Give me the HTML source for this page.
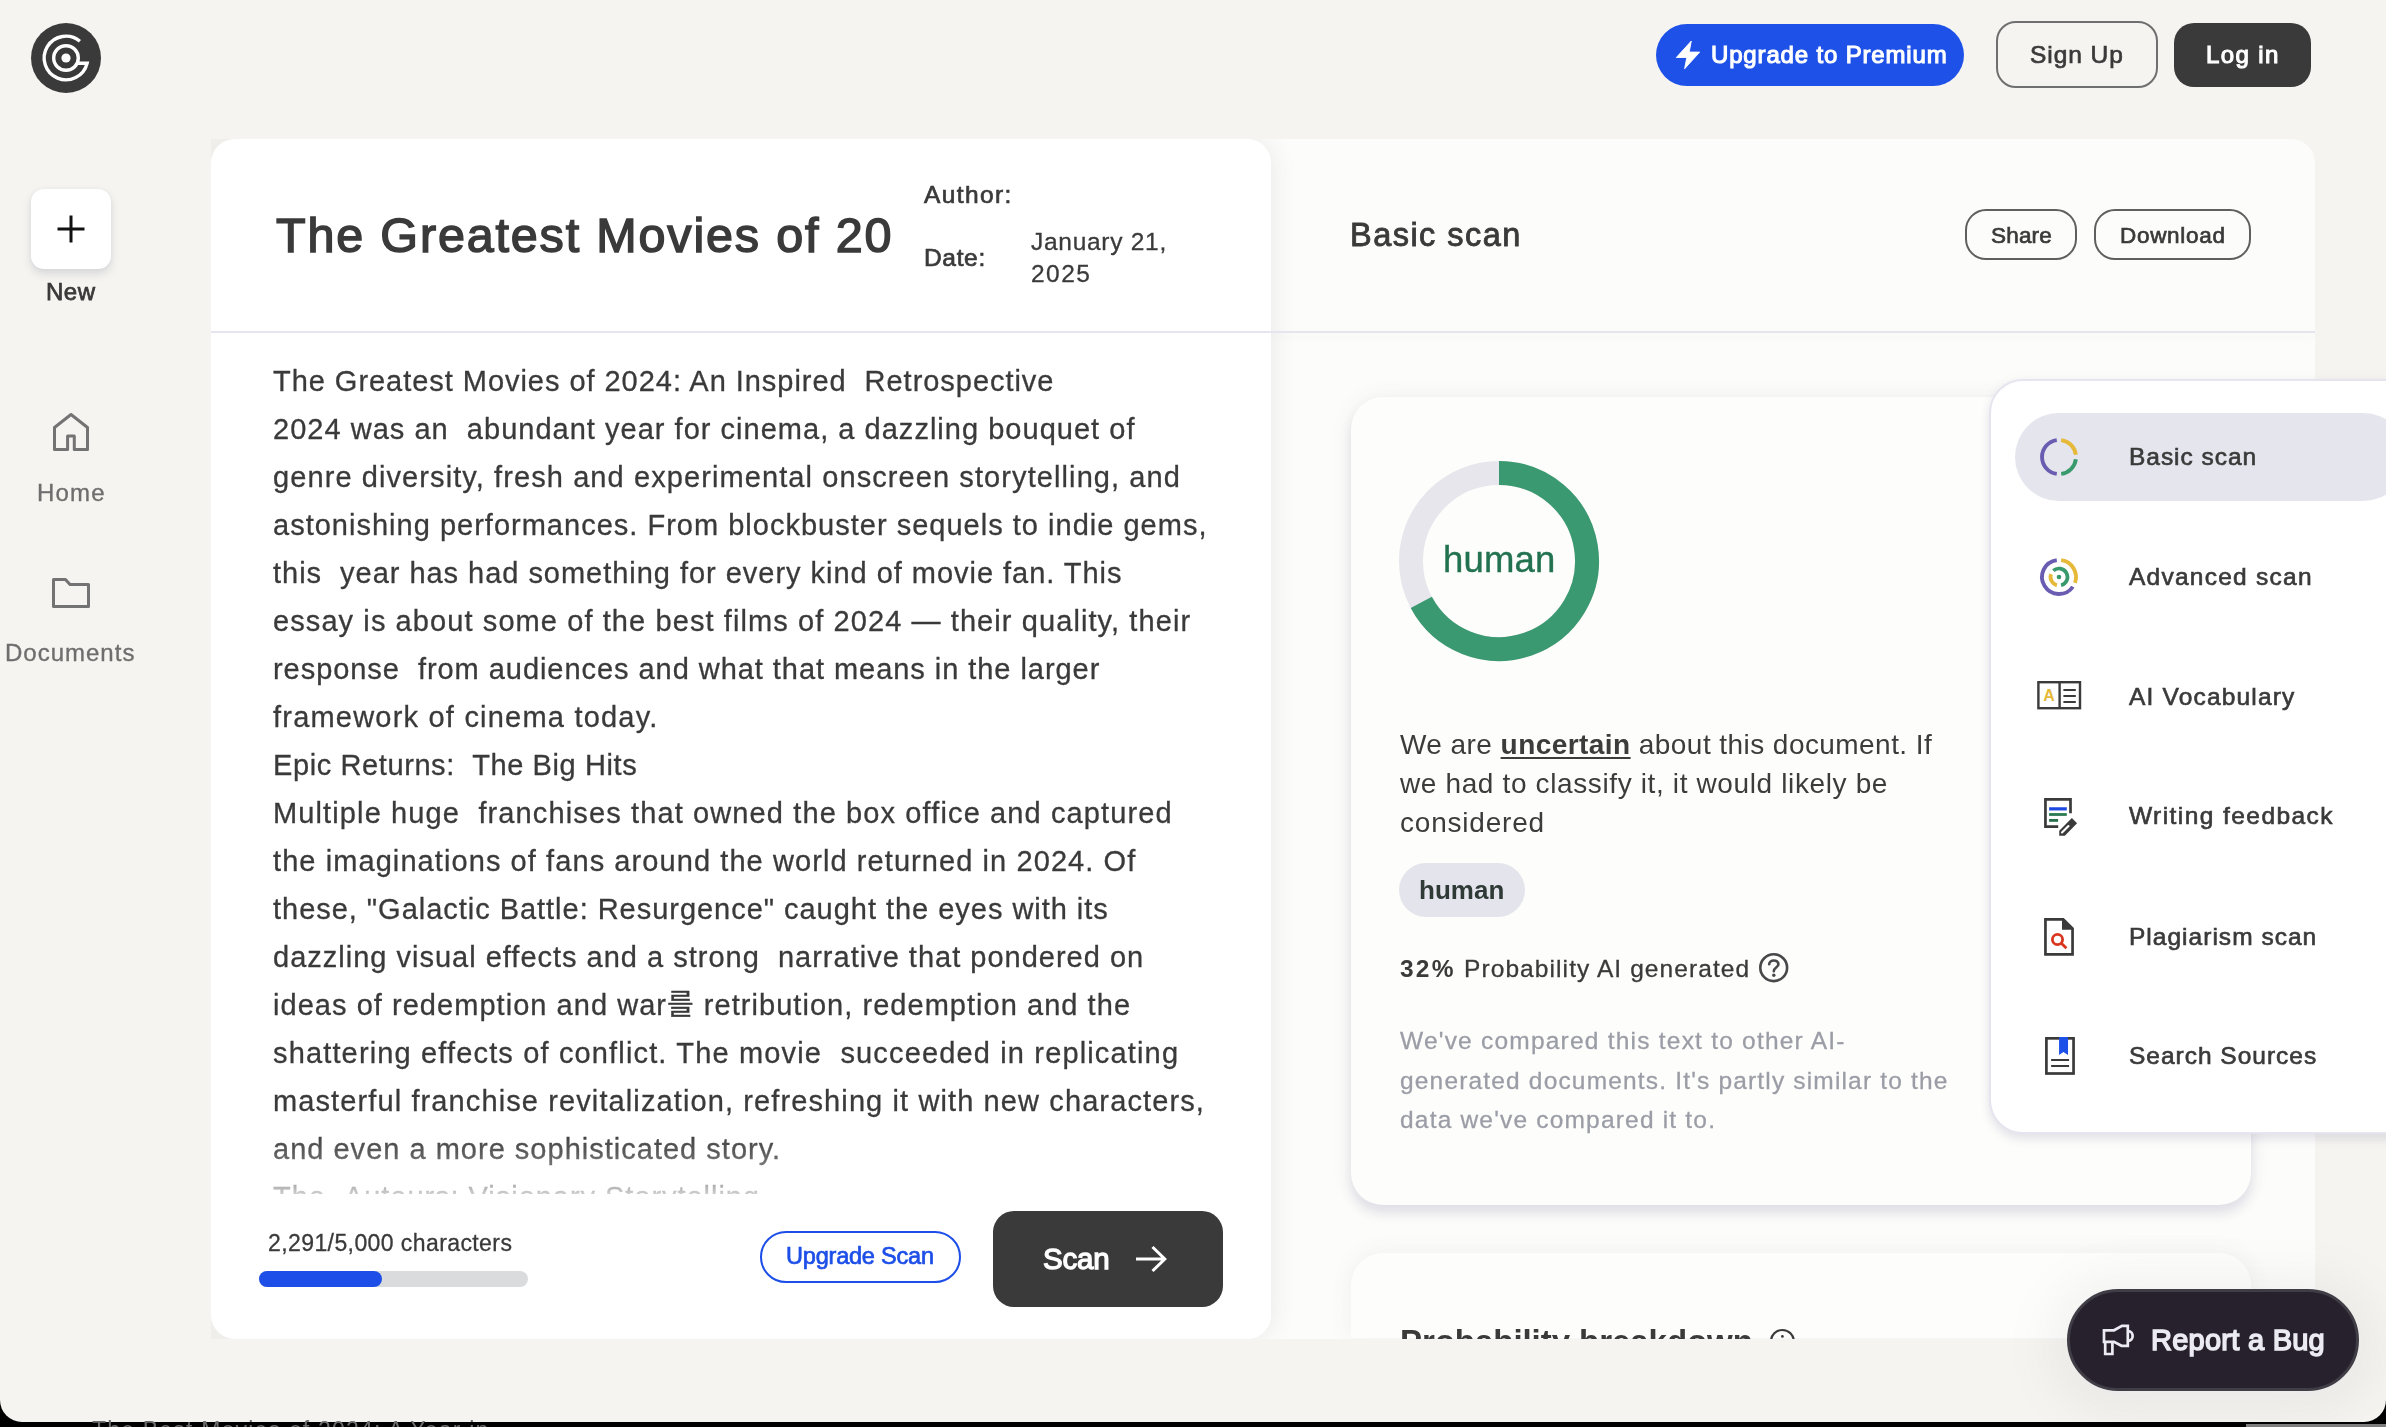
<!DOCTYPE html>
<html lang="en">
<head>
<meta charset="utf-8">
<title>GPTZero</title>
<style>
*{box-sizing:border-box;margin:0;padding:0}
html,body{width:2386px;height:1427px;overflow:hidden;background:#000}
body{font-family:"Liberation Sans","Noto Sans CJK KR",sans-serif;color:#3a3a3a;position:relative}
.abs{position:absolute}
#win{position:absolute;left:0;top:0;width:2386px;height:1422px;background:#f5f4f0;border-radius:0 0 22px 22px;overflow:hidden}
.t{position:absolute;white-space:nowrap;line-height:1;will-change:transform}
/* sidebar */
#logo{left:31px;top:23px;width:70px;height:70px}
#newbtn{left:31px;top:189px;width:80px;height:80px;background:#fff;border-radius:13px;box-shadow:0 5px 8px rgba(120,125,150,.22),0 0 4px rgba(120,125,150,.08)}
/* main */
#cornerbg{left:211px;top:139px;width:40px;height:1199.5px;background:#efeeeb}
#right{left:1241px;top:139px;width:1074px;height:1199.5px;background:#fcfcfa;border-radius:0 24px 24px 0;overflow:hidden}
#right:before{content:'';position:absolute;left:-200px;top:0;width:230px;height:1199.5px;border-radius:24px;box-shadow:0 0 26px rgba(60,60,90,.11)}
#left{left:211px;top:139px;width:1060px;height:1199.5px;background:#fff;border-radius:24px}
.hr{height:2px;background:#e6e5ee}
/* body text */
#doc{left:273px;top:357px;width:980px;height:837px;overflow:hidden;will-change:transform}
#doc .l{display:block;height:48px;line-height:48px;white-space:nowrap;font-size:29px;color:#3a3a3a;-webkit-text-stroke:.3px #3a3a3a}
#fade{left:221px;top:1130px;width:1040px;height:80px;background:linear-gradient(rgba(255,255,255,0),rgba(255,255,255,.17) 28%,rgba(255,255,255,.45) 60%,rgba(255,255,255,.72) 78%,#fff 100%)}
.pill{position:absolute;border-radius:999px;display:flex;align-items:center;justify-content:center;white-space:nowrap}
</style>
</head>
<body>
<div id="win">
<nav>
<svg class="abs" id="logo" viewBox="0 0 70 70">
<circle cx="35" cy="35" r="35" fill="#3a3a3a"/>
<g fill="none" stroke="#fff" stroke-width="3.4">
<path d="M48.9 18.2 A21.8 21.8 0 1 0 56.1 40.3 H46.5" stroke-linejoin="miter"/>
<circle cx="35" cy="35" r="12.3"/>
</g>
<circle cx="35" cy="35" r="4.6" fill="#fff"/>
</svg>
<div class="abs" id="newbtn"></div>
<svg class="abs" style="left:55px;top:213px;width:32px;height:32px" viewBox="0 0 32 32"><path d="M16 2.5V29.5M2.5 16H29.5" stroke="#111" stroke-width="3" fill="none"/></svg>
<div class="t" style="left:45.5px;top:280.3px;font-size:24px;letter-spacing:0.54px;-webkit-text-stroke:0.75px currentColor;">New</div>
<svg class="abs" style="left:49px;top:410px;width:44px;height:44px" viewBox="0 0 44 44" fill="none" stroke="#737373" stroke-width="3" stroke-linejoin="round" stroke-linecap="round">
<path d="M5.5 17.5 L22 4.5 L38.5 17.5 V39.5 H25.3 V26 H18.6 V39.5 H5.5 Z"/></svg>
<div class="t" style="left:36.8px;top:480.5px;font-size:24px;color:#6e6e6e;letter-spacing:1.16px;-webkit-text-stroke:0.35px currentColor;">Home</div>
<svg class="abs" style="left:49px;top:572px;width:44px;height:44px" viewBox="0 0 44 44" fill="none" stroke="#737373" stroke-width="3" stroke-linejoin="round">
<path d="M4.5 7.5 H16.5 L21 12.5 H39.5 V34.5 H4.5 Z"/></svg>
<div class="t" style="left:5.2px;top:641.0px;font-size:24px;color:#6e6e6e;letter-spacing:1.00px;-webkit-text-stroke:0.35px currentColor;">Documents</div>
</nav>
<header>
<div class="pill" style="left:1656px;top:24px;width:308px;height:62px;background:#1d51e8"></div>
<svg class="abs" style="left:1674px;top:39px;width:28px;height:32px" viewBox="0 0 28 32"><path d="M17.3 2 L2.3 18.5 H12.8 L10.6 29.8 L25.7 13.1 H15.2 Z" fill="#fff" stroke="#fff" stroke-width="0.9" stroke-linejoin="round"/></svg>
<div class="t" style="left:1711.3px;top:42.8px;font-size:24px;color:#fff;letter-spacing:0.84px;-webkit-text-stroke:1.1px currentColor;">Upgrade to Premium</div>
<div class="abs" style="left:1996px;top:21px;width:162px;height:67px;border:2px solid #6f6f6f;border-radius:20px"></div>
<div class="t" style="left:2030.0px;top:42.5px;font-size:24.5px;letter-spacing:0.94px;-webkit-text-stroke:0.7px currentColor;">Sign Up</div>
<div class="abs" style="left:2174px;top:23px;width:137px;height:64px;background:#3a3a3a;border-radius:20px"></div>
<div class="t" style="left:2206.0px;top:42.8px;font-size:24px;color:#fff;letter-spacing:1.38px;-webkit-text-stroke:1.1px currentColor;">Log in</div>
</header>
<main>
<div class="abs" id="cornerbg"></div>
<div class="abs" id="right"></div>
<div class="abs hr" style="left:1271px;top:331px;width:1044px;box-shadow:0 3px 8px rgba(90,90,130,.08)"></div>
<div class="abs" id="left"></div>
<div class="abs hr" style="left:211px;top:331px;width:1060px"></div>
<div class="t" style="left:276.0px;top:210.9px;font-size:48.5px;letter-spacing:1.83px;-webkit-text-stroke:1.5px currentColor;">The Greatest Movies of 20</div>
<div class="t" style="left:924.3px;top:182.6px;font-size:24.5px;letter-spacing:1.37px;-webkit-text-stroke:0.7px currentColor;">Author:</div>
<div class="t" style="left:924.3px;top:246.1px;font-size:24.5px;letter-spacing:0.66px;-webkit-text-stroke:0.7px currentColor;">Date:</div>
<div class="t" style="left:1030.5px;top:230.2px;font-size:24.5px;letter-spacing:0.72px;-webkit-text-stroke:0.3px currentColor;">January 21,</div>
<div class="t" style="left:1030.5px;top:262.0px;font-size:24.5px;letter-spacing:1.46px;-webkit-text-stroke:0.3px currentColor;">2025</div>
<div class="abs" id="doc">
<span class="l" style="letter-spacing:0.96px">The Greatest Movies of 2024: An Inspired &nbsp;Retrospective</span>
<span class="l" style="letter-spacing:1.02px">2024 was an &nbsp;abundant year for cinema, a dazzling bouquet of</span>
<span class="l" style="letter-spacing:1.09px">genre diversity, fresh and experimental onscreen storytelling, and</span>
<span class="l" style="letter-spacing:1.01px">astonishing performances. From blockbuster sequels to indie gems,</span>
<span class="l" style="letter-spacing:0.97px">this &nbsp;year has had something for every kind of movie fan. This</span>
<span class="l" style="letter-spacing:1.09px">essay is about some of the best films of 2024 — their quality, their</span>
<span class="l" style="letter-spacing:0.95px">response &nbsp;from audiences and what that means in the larger</span>
<span class="l" style="letter-spacing:1.21px">framework of cinema today.</span>
<span class="l" style="letter-spacing:0.60px">Epic Returns: &nbsp;The Big Hits</span>
<span class="l" style="letter-spacing:1.12px">Multiple huge &nbsp;franchises that owned the box office and captured</span>
<span class="l" style="letter-spacing:1.08px">the imaginations of fans around the world returned in 2024. Of</span>
<span class="l" style="letter-spacing:0.97px">these, "Galactic Battle: Resurgence" caught the eyes with its</span>
<span class="l" style="letter-spacing:1.00px">dazzling visual effects and a strong &nbsp;narrative that pondered on</span>
<span class="l" style="letter-spacing:1.04px">ideas of redemption and war를 retribution, redemption and the</span>
<span class="l" style="letter-spacing:1.15px">shattering effects of conflict. The movie &nbsp;succeeded in replicating</span>
<span class="l" style="letter-spacing:1.11px">masterful franchise revitalization, refreshing it with new characters,</span>
<span class="l" style="letter-spacing:1.01px">and even a more sophisticated story.</span>
<span class="l" style="letter-spacing:0.96px">The &nbsp;Auteurs: Visionary Storytelling</span>
</div>
<div class="abs" id="fade"></div>
<div class="t" style="left:267.8px;top:1232.2px;font-size:23px;letter-spacing:0.41px;-webkit-text-stroke:0.3px currentColor;">2,291/5,000 characters</div>
<div class="abs" style="left:259px;top:1271px;width:269px;height:16px;border-radius:8px;background:#d9dbdc"></div>
<div class="abs" style="left:259px;top:1271px;width:123px;height:16px;border-radius:8px;background:#1d4fe8"></div>
<div class="pill" style="left:760px;top:1231px;width:201px;height:52px;border:2px solid #1d4fe8;background:#fff"></div>
<div class="t" style="left:786.4px;top:1245.1px;font-size:23.5px;color:#1d4fe8;letter-spacing:-0.20px;-webkit-text-stroke:0.7px currentColor;">Upgrade Scan</div>
<div class="abs" style="left:993px;top:1211px;width:230px;height:96px;border-radius:21px;background:#3a3a3a"></div>
<div class="t" style="left:1042.5px;top:1243.7px;font-size:29.5px;color:#fff;letter-spacing:-0.18px;-webkit-text-stroke:1.3px currentColor;">Scan</div>
<svg class="abs" style="left:1132px;top:1243px;width:38px;height:32px" viewBox="0 0 38 32"><path d="M4 16H33M20.5 4L32.8 16L20.5 28" stroke="#fff" stroke-width="3" fill="none"/></svg>
</main>
<section>
<div class="t" style="left:1350.3px;top:218.7px;font-size:32.5px;letter-spacing:1.47px;-webkit-text-stroke:0.85px currentColor;">Basic scan</div>
<div class="abs" style="left:1965px;top:209px;width:112px;height:51px;border:2px solid #5f5f5f;border-radius:21px"></div>
<div class="t" style="left:1991.4px;top:224.8px;font-size:22.5px;letter-spacing:0.19px;-webkit-text-stroke:0.7px currentColor;">Share</div>
<div class="abs" style="left:2094px;top:209px;width:157px;height:51px;border:2px solid #5f5f5f;border-radius:21px"></div>
<div class="t" style="left:2120.3px;top:224.8px;font-size:22.5px;letter-spacing:0.69px;-webkit-text-stroke:0.7px currentColor;">Download</div>
<div class="abs" style="left:1271px;top:333px;width:1044px;height:1005.5px;overflow:hidden;border-radius:0 0 24px 0"><div class="abs" style="left:-1271px;top:-333px;width:10px;height:10px">
<div class="abs" style="left:1351px;top:397px;width:900px;height:808px;border-radius:32px;background:#fdfdfb;box-shadow:0 8px 12px rgba(90,90,140,.15),0 0 22px rgba(90,90,130,.07)"></div>
<div class="abs" style="left:1351px;top:1253px;width:900px;height:85px;border-radius:32px 32px 0 0;background:#fdfdfb;box-shadow:0 0 22px rgba(90,90,130,.08)"></div>
</div></div>
<svg class="abs" style="left:1395px;top:457px;width:208px;height:208px" viewBox="1395 457 208 208" fill="none" stroke-width="24">
<circle cx="1499" cy="561" r="88" stroke="#e6e6ec"/>
<path d="M1499.00 473.00 A88 88 0 1 1 1421.30 602.31" stroke="#3a9970"/>
</svg>
<div class="t" style="left:1442.8px;top:541.9px;font-size:36.5px;color:#227250;letter-spacing:0.15px;-webkit-text-stroke:0.4px currentColor;">human</div>
<div class="t" style="left:1399.5px;top:731.0px;font-size:28px;color:#3c3c3c;letter-spacing:0.44px;">We are <b style="text-decoration:underline;text-decoration-thickness:2px;text-underline-offset:3px">uncertain</b> about this document. If</div>
<div class="t" style="left:1399.5px;top:770.0px;font-size:28px;color:#3c3c3c;letter-spacing:0.63px;">we had to classify it, it would likely be</div>
<div class="t" style="left:1399.5px;top:808.8px;font-size:28px;color:#3c3c3c;letter-spacing:0.80px;">considered</div>
<div class="pill" style="left:1399px;top:863px;width:126px;height:54px;background:#e4e4ec"></div>
<div class="t" style="left:1419.2px;top:876.6px;font-size:26px;font-weight:700;color:#2f3a37;letter-spacing:0.04px;">human</div>
<div class="t" style="left:1399.5px;top:956.6px;font-size:24.5px;font-weight:700;letter-spacing:2.23px;">32%</div>
<div class="t" style="left:1464.3px;top:956.6px;font-size:24.5px;letter-spacing:1.09px;-webkit-text-stroke:0.3px currentColor;">Probability AI generated</div>
<svg class="abs" style="left:1757px;top:951px;width:34px;height:34px" viewBox="0 0 34 34" fill="none" stroke="#48484b" stroke-width="2.6">
<circle cx="16.7" cy="16.7" r="13.4"/><path d="M12.2 13.3 C12.2 8.2 21.4 8.2 21.4 13.2 C21.4 16.6 16.8 16.4 16.8 20.2" stroke-linecap="round"/><circle cx="16.8" cy="24.3" r="1.7" fill="#48484b" stroke="none"/></svg>
<div class="t" style="left:1399.5px;top:1028.8px;font-size:24.5px;color:#9b9da6;letter-spacing:1.22px;-webkit-text-stroke:0.3px currentColor;">We've compared this text to other AI-</div>
<div class="t" style="left:1399.5px;top:1068.6px;font-size:24.5px;color:#9b9da6;letter-spacing:1.17px;-webkit-text-stroke:0.3px currentColor;">generated documents. It's partly similar to the</div>
<div class="t" style="left:1399.5px;top:1108.3px;font-size:24.5px;color:#9b9da6;letter-spacing:1.19px;-webkit-text-stroke:0.3px currentColor;">data we've compared it to.</div>
<div class="abs" style="left:1380px;top:1300px;width:460px;height:38.5px;overflow:hidden">
<div class="t" style="left:20.0px;top:25.1px;font-size:33px;font-weight:700;letter-spacing:-0.05px;">Probability breakdown</div>
<svg class="abs" style="left:388px;top:27px;width:30px;height:30px" viewBox="0 0 30 30" fill="none" stroke="#3a3a3a" stroke-width="2.2"><circle cx="14.4" cy="14.4" r="11.4"/><circle cx="14.4" cy="9.4" r="1.4" fill="#3a3a3a" stroke="none"/></svg>
</div>
</section>
<aside>
<div class="abs" style="left:1989px;top:379px;width:460px;height:755px;border-radius:34px;background:#fff;border:2px solid #e5e4ef;box-shadow:0 6px 10px rgba(90,90,140,.13),0 0 12px rgba(90,90,130,.05)"></div>
<div class="abs" style="left:2015px;top:413px;width:392px;height:88px;border-radius:44px;background:#e5e5ee"></div>
<svg class="abs" style="left:2035px;top:433px;width:48px;height:48px" viewBox="2035 433 48 48" fill="none" stroke-width="3.9">
<path d="M2056.78 473.85 A17 17 0 0 1 2056.78 440.15" stroke="#6a5cb0"/><path d="M2061.22 440.15 A17 17 0 0 1 2075.85 454.78" stroke="#e6b93a"/><path d="M2075.85 459.22 A17 17 0 0 1 2061.22 473.85" stroke="#389a6c"/></svg>
<div class="t" style="left:2128.5px;top:444.9px;font-size:24.5px;letter-spacing:0.96px;-webkit-text-stroke:0.65px currentColor;">Basic scan</div>
<svg class="abs" style="left:2035px;top:553px;width:48px;height:48px" viewBox="2035 553 48 48" fill="none" stroke-width="3.9">
<path d="M2072.93 586.75 A17 17 0 1 1 2056.78 560.15" stroke="#6a5cb0"/><path d="M2061.22 560.15 A17 17 0 0 1 2074.97 582.81" stroke="#e6b93a"/>
<path d="M2053.31 570.68 A8.5 8.5 0 1 1 2061.06 585.25" stroke="#389a6c" stroke-width="3.7"/><path d="M2056.94 585.25 A8.5 8.5 0 0 1 2051.01 574.09" stroke="#e6b93a" stroke-width="3.7"/>
<circle cx="2059" cy="577" r="2.3" fill="#389a6c"/></svg>
<div class="t" style="left:2128.5px;top:565.1px;font-size:24.5px;letter-spacing:1.25px;-webkit-text-stroke:0.65px currentColor;">Advanced scan</div>
<svg class="abs" style="left:2035px;top:678px;width:50px;height:34px" viewBox="2035 678 50 34" fill="none" stroke="#3a3a3a" stroke-width="2.4">
<rect x="2038.4" y="682.2" width="41.6" height="26"/><path d="M2059.6 682V708"/>
<path d="M2063.4 690H2075.8M2063.4 695.9H2075.8M2063.4 701.9H2075.8" stroke-width="2"/>
<text x="2049" y="701" font-family="Liberation Sans,sans-serif" font-weight="700" font-size="16" fill="#e6b93a" stroke="none" text-anchor="middle">A</text></svg>
<div class="t" style="left:2128.5px;top:684.8px;font-size:24.5px;letter-spacing:1.18px;-webkit-text-stroke:0.65px currentColor;">AI Vocabulary</div>
<svg class="abs" style="left:2040px;top:794px;width:42px;height:46px" viewBox="2040 794 42 46" fill="none">
<path d="M2070.5 813.2V799.4H2045.45V826.55H2058.2" stroke="#3a3a3a" stroke-width="2.7"/>
<path d="M2049.1 808.85H2066.8" stroke="#1c47e0" stroke-width="3.2"/><path d="M2049.1 814.5H2066.8" stroke="#2a7a52" stroke-width="2.8"/><path d="M2049.1 820.4H2058.1" stroke="#266f4b" stroke-width="2.8"/>
<path d="M2071.85 818.1L2077.06 823.16L2064.84 835.77H2059.24V830.73Z" fill="#3a3a3a"/><path d="M2062 832.5L2068.5 826" stroke="#fff" stroke-width="2.1" stroke-linecap="round"/></svg>
<div class="t" style="left:2128.5px;top:804.4px;font-size:24.5px;letter-spacing:1.43px;-webkit-text-stroke:0.65px currentColor;">Writing feedback</div>
<svg class="abs" style="left:2040px;top:914px;width:40px;height:46px" viewBox="2040 914 40 46" fill="none">
<path d="M2045.45 919.4H2063.2L2072.55 928.6V954.4H2045.45Z" stroke="#3a3a3a" stroke-width="2.7"/><path d="M2062 919V929.7H2073V928Z" fill="#3a3a3a"/>
<circle cx="2057.5" cy="939.5" r="5.1" stroke="#d8361e" stroke-width="2.8"/><path d="M2061.3 943.2L2066.4 948.2" stroke="#d8361e" stroke-width="2.9"/></svg>
<div class="t" style="left:2128.5px;top:924.6px;font-size:24.5px;letter-spacing:1.02px;-webkit-text-stroke:0.65px currentColor;">Plagiarism scan</div>
<svg class="abs" style="left:2040px;top:1033px;width:40px;height:46px" viewBox="2040 1033 40 46" fill="none">
<rect x="2046.4" y="1038.35" width="27.15" height="35.15" stroke="#3a3a3a" stroke-width="2.7"/>
<path d="M2059.07 1037V1054.96L2063.44 1051.9L2068.04 1054.96V1037Z" fill="#1d50e8"/>
<path d="M2051.1 1060H2069.05M2051.1 1065.9H2069.05" stroke="#3a3a3a" stroke-width="2"/></svg>
<div class="t" style="left:2128.5px;top:1044.3px;font-size:24.5px;letter-spacing:0.99px;-webkit-text-stroke:0.65px currentColor;">Search Sources</div>
</aside>
<div class="pill" style="left:2067px;top:1289px;width:292px;height:102px;background:#27212e;border:3px solid #403d46;box-shadow:0 6px 44px 22px rgba(120,120,130,.075)"></div>
<svg class="abs" style="left:2098px;top:1320px;width:40px;height:40px" viewBox="2098 1320 40 40" fill="none" stroke="#ecebf3" stroke-width="2.7" stroke-linejoin="miter">
<path d="M2104 1330.3H2114L2122 1325.8H2127.8V1345.8H2121.5L2114 1341.8H2104Z"/><path d="M2105.2 1342V1354H2112.4V1342"/><path d="M2128 1331.2C2134.2 1331.2 2134.2 1340.8 2128 1340.8"/></svg>
<div class="t" style="left:2150.5px;top:1326.0px;font-size:29px;color:#ecebf3;letter-spacing:0.26px;-webkit-text-stroke:1.5px currentColor;">Report a Bug</div>
</div>
<div class="t" style="left:92px;top:1419px;font-size:23px;color:#6d6d6d;letter-spacing:1.2px">The Best Movies of 2024: A Year in</div>
<div class="abs" style="left:2246px;top:1424px;width:140px;height:3px;background:#7d7d7d"></div>
</body>
</html>
